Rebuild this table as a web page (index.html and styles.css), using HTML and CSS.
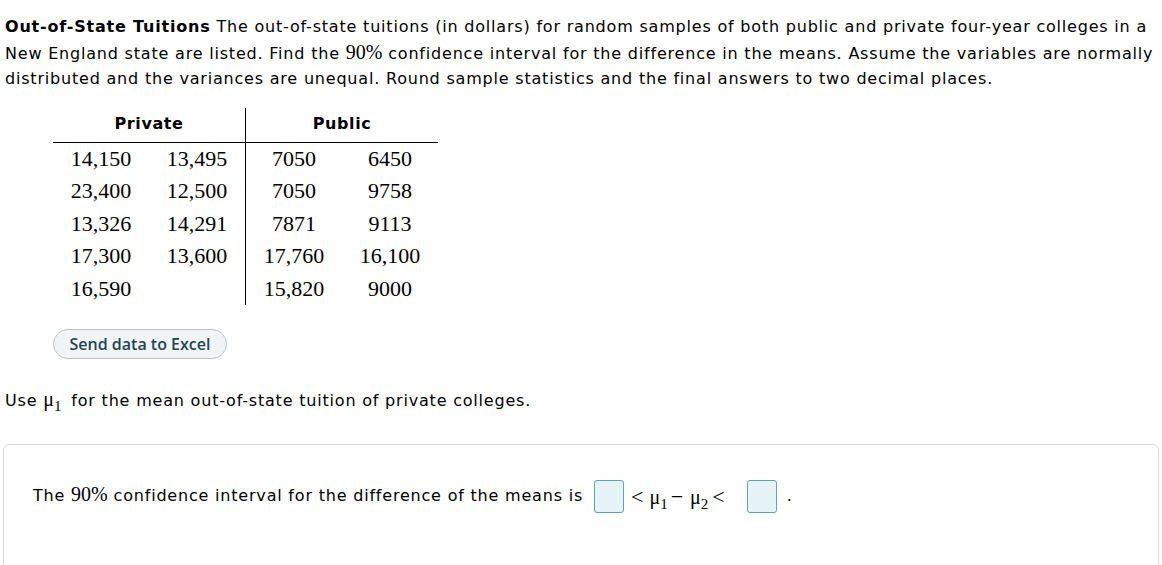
FILE: index.html
```html
<!DOCTYPE html>
<html>
<head>
<meta charset="utf-8">
<link rel="stylesheet" href="styles.css">
</head>
<body>
<div class="page">
  <p class="intro"><b>Out-of-State Tuitions</b> The out-of-state tuitions (in dollars) for random samples of both public and private four-year colleges in a New England state are listed. Find the <span class="math">90%</span> confidence interval for the difference in the means. Assume the variables are normally distributed and the variances are unequal. Round sample statistics and the final answers to two decimal places.</p>

  <div class="data">
    <div class="head left">Private</div>
    <div class="head right">Public</div>
    <div class="col left">
      <span>14,150</span><span>13,495</span>
      <span>23,400</span><span>12,500</span>
      <span>13,326</span><span>14,291</span>
      <span>17,300</span><span>13,600</span>
      <span>16,590</span><span></span>
    </div>
    <div class="col right">
      <span>7050</span><span>6450</span>
      <span>7050</span><span>9758</span>
      <span>7871</span><span>9113</span>
      <span>17,760</span><span>16,100</span>
      <span>15,820</span><span>9000</span>
    </div>
  </div>

  <button class="excel">Send data to Excel</button>

  <p class="use">Use <span class="math mu">μ<sub>1</sub></span> for the mean out-of-state tuition of private colleges.</p>

  <div class="answer">
    <p class="answer-line">The <span class="math">90%</span> confidence interval for the difference of the means is <span class="inp"></span><span class="math rel"><span class="op lt">&lt;</span>μ<sub>1</sub><span class="op minus">−</span>μ<sub>2</sub><span class="op gt">&lt;</span></span><span class="inp"></span><span class="dot">.</span></p>
  </div>
</div>
</body>
</html>
```

FILE: styles.css
```css
html, body {
  margin: 0;
  padding: 0;
  background: #ffffff;
}

.page {
  padding: 14px 3px 0 3px;
  color: #000;
  font-family: "DejaVu Sans", Verdana, sans-serif;
  font-size: 16px;
  letter-spacing: 0.8px;
}

.intro {
  margin: 0;
  padding-left: 2px;
  line-height: 25.5px;
}

.intro b {
  font-weight: bold;
}

.math {
  font-family: "Liberation Serif", "Times New Roman", serif;
  font-size: 20px;
  letter-spacing: 0;
}

.data {
  display: grid;
  grid-template-columns: 193px 192px;
  margin: 16px 0 0 50px;
  width: 385px;
  letter-spacing: 0;
}

.head {
  font-weight: bold;
  text-align: center;
  height: 34px;
  line-height: 32px;
  border-bottom: 1px solid #000;
  letter-spacing: 0.6px;
}

.head.left {
  border-right: 1px solid #000;
}

.col {
  display: grid;
  grid-template-columns: 1fr 1fr;
  grid-auto-rows: 32.5px;
  font-family: "Liberation Serif", "Times New Roman", serif;
  font-size: 22px;
  padding: 0;
}

.col span {
  text-align: center;
  line-height: 31px;
}

.col.left {
  border-right: 1px solid #000;
}

.excel {
  display: block;
  margin: 24px 0 0 50px;
  height: 30px;
  width: 174px;
  padding: 0;
  border: 1px solid #b9c3c7;
  border-radius: 15px;
  background: #f1f4f5;
  color: #1f4657;
  font-family: "Open Sans", "Liberation Sans", sans-serif;
  font-weight: 600;
  font-size: 16px;
  letter-spacing: 0;
}

.use {
  margin: 28px 0 0 2px;
  line-height: 24px;
}

.mu {
  margin: 0 4px 0 0;
}

sub {
  font-size: 15px;
  vertical-align: -5px;
  line-height: 0;
}

.answer {
  margin-top: 31px;
  border: 1px solid #d8dcde;
  border-radius: 6px;
  height: 140px;
  padding: 33px 0 0 29px;
}

.answer-line {
  margin: 0;
  line-height: 33px;
  white-space: nowrap;
}

.inp {
  display: inline-block;
  vertical-align: middle;
  width: 28px;
  height: 31px;
  border: 1px solid #5ea2b5;
  border-radius: 3px;
  background: #e6f3f7;
  margin-left: 5px;
}

.rel {
  display: inline-block;
  vertical-align: middle;
  margin: 0 0 0 7px;
  line-height: 33px;
}

.op {
  font-size: 22px;
}

.lt {
  margin-right: 6px;
}

.minus {
  margin: 0 7px 0 3px;
}

.gt {
  margin: 0 22px 0 4px;
}

.rel + .inp {
  margin-left: 0;
}

.dot {
  margin-left: 10px;
}
```
